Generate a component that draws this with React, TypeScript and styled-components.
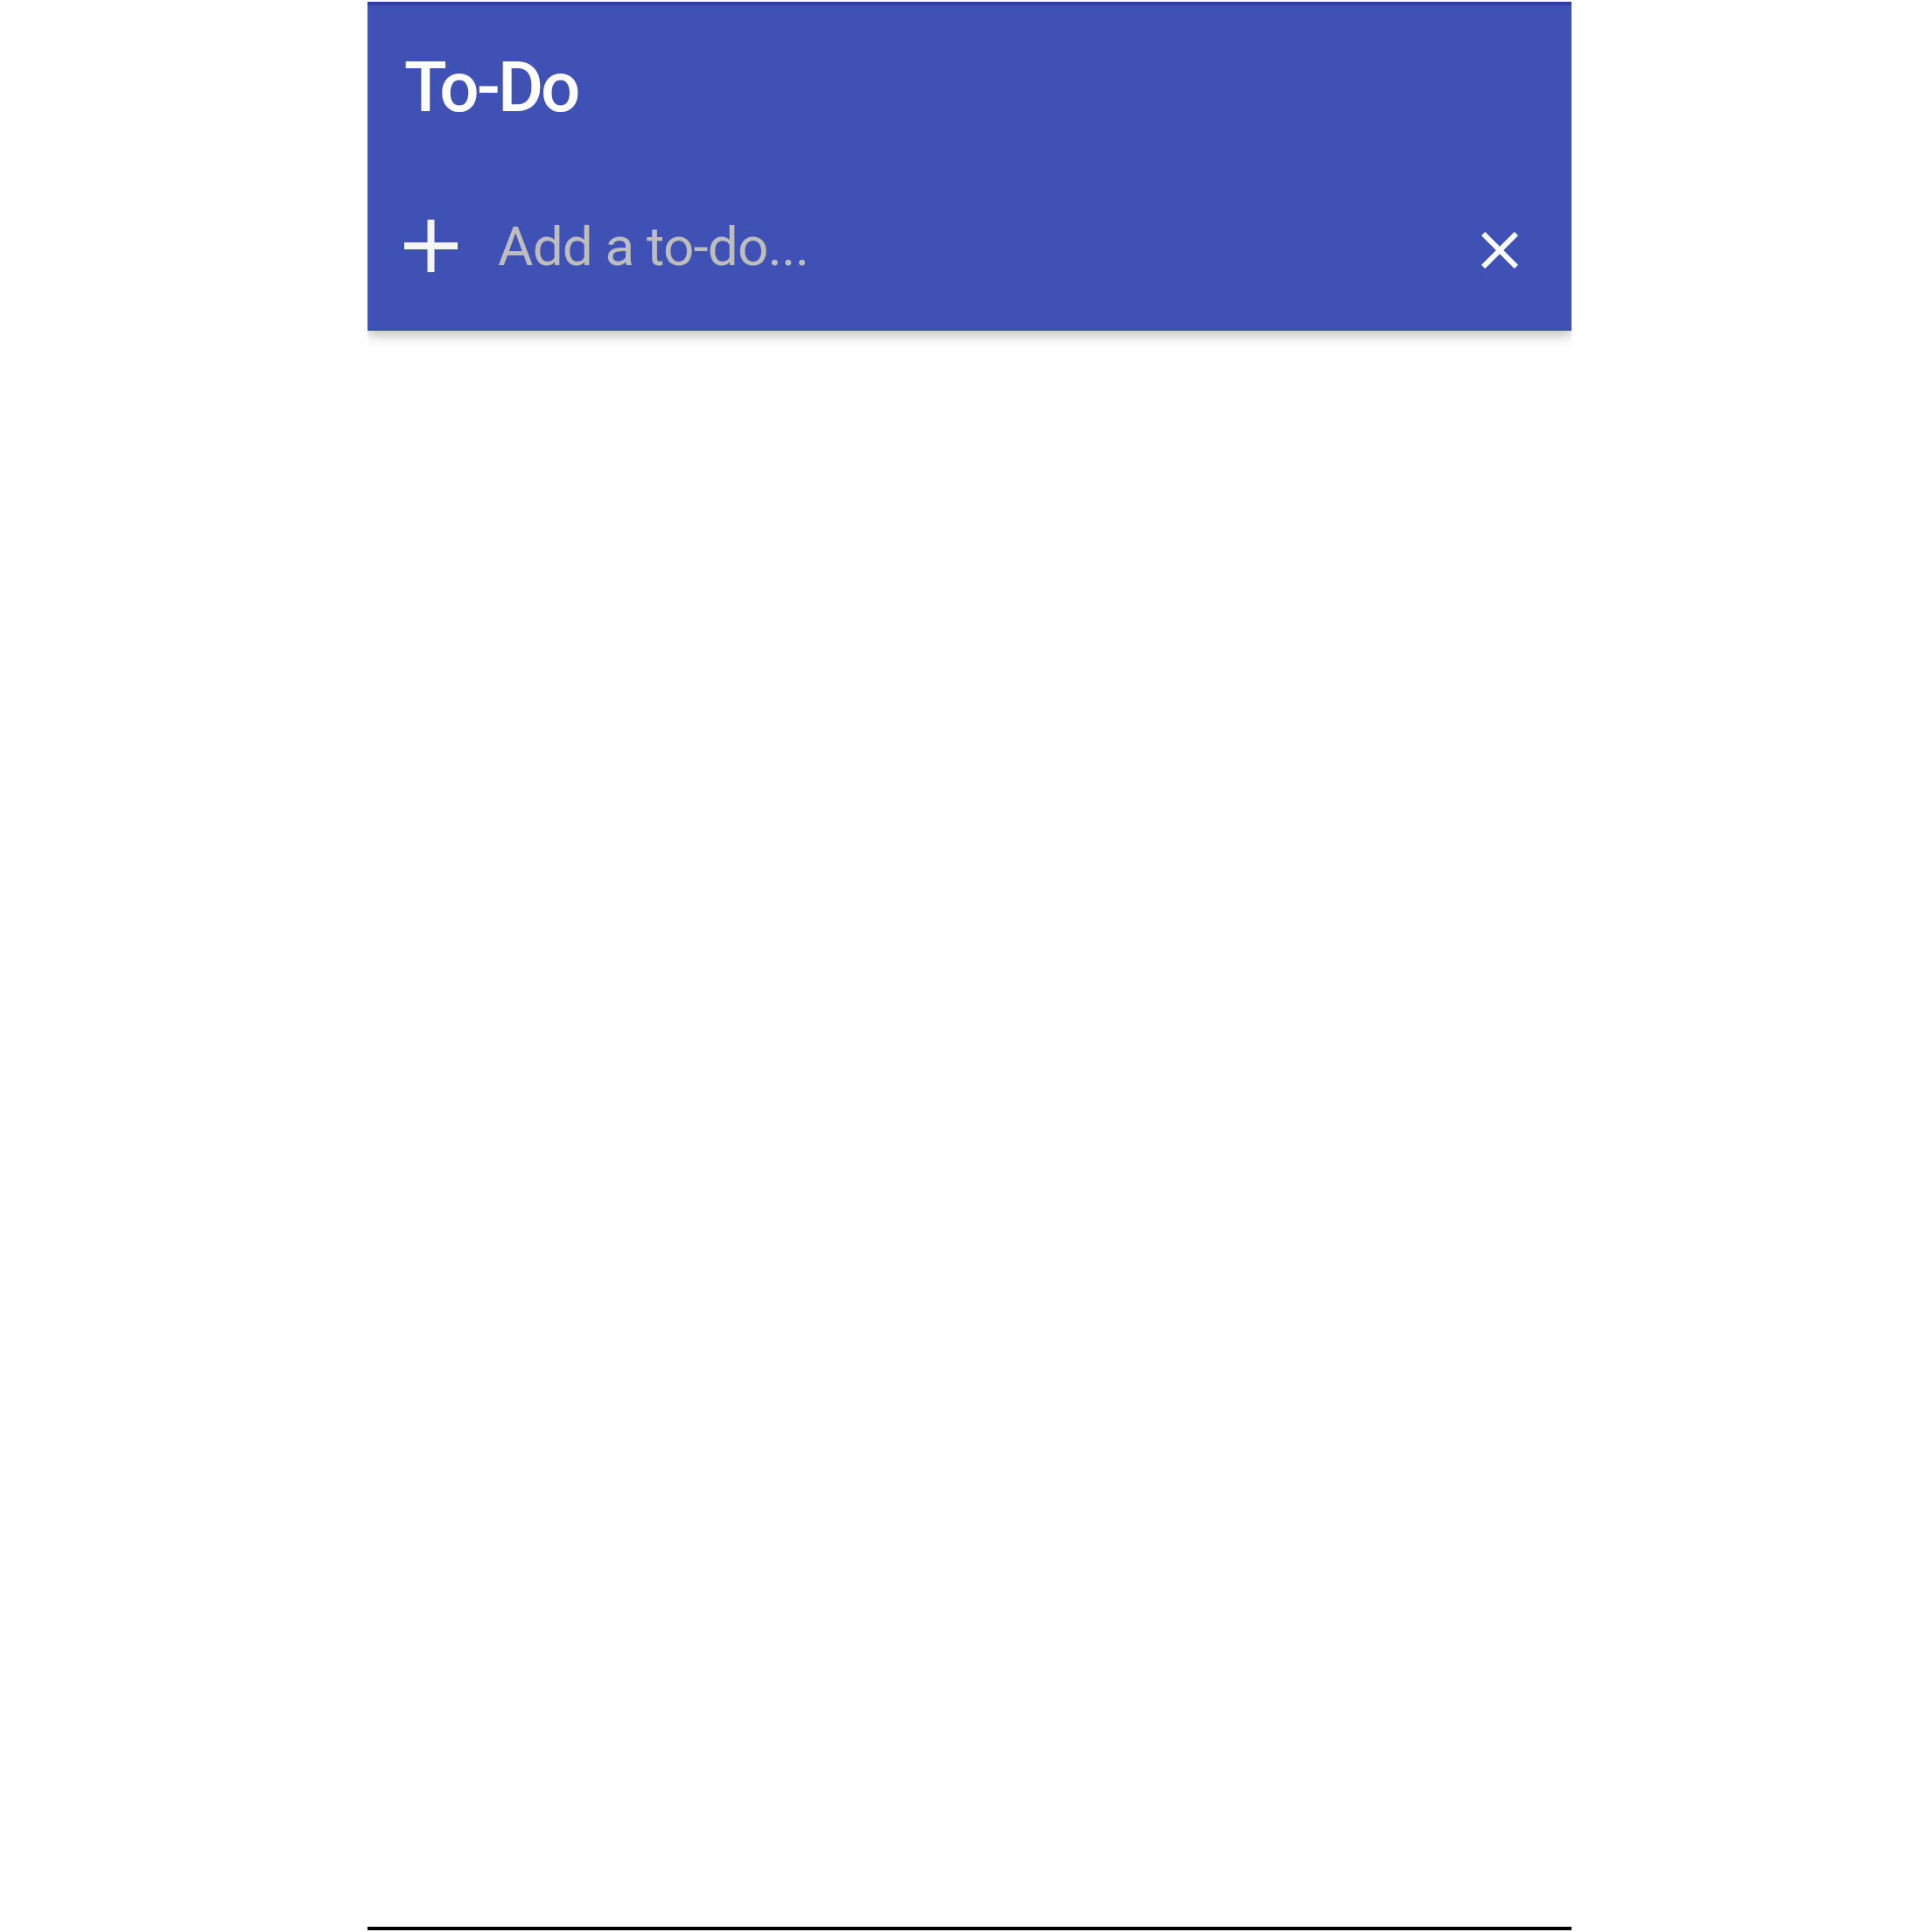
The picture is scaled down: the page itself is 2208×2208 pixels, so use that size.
import styled, { createGlobalStyle } from 'styled-components';

const GlobalStyle = createGlobalStyle`
  html, body {
    margin: 0;
    padding: 0;
    background: #ffffff;
    font-family: Roboto, "Liberation Sans", Arial, sans-serif;
  }
`;

const Panel = styled.div`
  box-sizing: border-box;
  width: 1376px;
  height: 2204px;
  margin: 2px 0 0 420px;
  display: flex;
  flex-direction: column;
  overflow: hidden;
  border-bottom: 4px solid #000;
  background: #fefefe;
`;

const Header = styled.header`
  box-sizing: border-box;
  height: 376px;
  border-top: 4px solid #303f9f;
  background: #3f51b5;
  box-shadow: 0 4px 14px rgba(0, 0, 0, 0.28);
  display: flex;
  flex-direction: column;
  padding: 0 42px;
  position: relative;
  z-index: 1;
`;

const Title = styled.h1`
  margin: 0;
  padding-top: 47px;
  font-size: 80px;
  line-height: 94px;
  font-weight: 500;
  color: #ffffff;
  letter-spacing: -3px;
`;

const InputRow = styled.div`
  display: flex;
  align-items: center;
  margin-top: 98px;
  height: 72px;
`;

const AddIcon = styled.svg`
  width: 61px;
  height: 60px;
  flex: none;
`;

const TodoInput = styled.input`
  flex: 1;
  min-width: 0;
  margin-left: 46px;
  background: none;
  border: none;
  outline: 0;
  padding: 0;
  font-family: Roboto, "Liberation Sans", Arial, sans-serif;
  font-size: 62px;
  letter-spacing: -0.8px;
  color: #ffffff;
  &::placeholder {
    color: #bdbdbd;
  }
`;

const ClearButton = styled.button`
  width: 72px;
  height: 72px;
  margin: 10px 4px 0 0;
  padding: 0;
  border: none;
  background: none;
  cursor: pointer;
  display: flex;
  align-items: center;
  justify-content: center;
  svg {
    width: 72px;
    height: 72px;
  }
`;

const List = styled.main`
  flex: 1;
`;

const App = () => {
  return (
    <>
      <GlobalStyle />
      <Panel>
        <Header>
          <Title>To-Do</Title>
          <InputRow>
            <AddIcon viewBox="0 0 61 60">
              <rect x="26.5" y="0" width="8" height="60" fill="#f5f5f5" />
              <rect x="0" y="26" width="61" height="8" fill="#f5f5f5" />
            </AddIcon>
            <TodoInput type="text" placeholder="Add a to-do..." />
            <ClearButton>
              <svg viewBox="0 0 24 24">
                <path
                  fill="#ffffff"
                  d="M19 6.41L17.59 5 12 10.59 6.41 5 5 6.41 10.59 12 5 17.59 6.41 19 12 13.41 17.59 19 19 17.59 13.41 12z"
                />
              </svg>
            </ClearButton>
          </InputRow>
        </Header>
        <List />
      </Panel>
    </>
  );
};

export default App;
